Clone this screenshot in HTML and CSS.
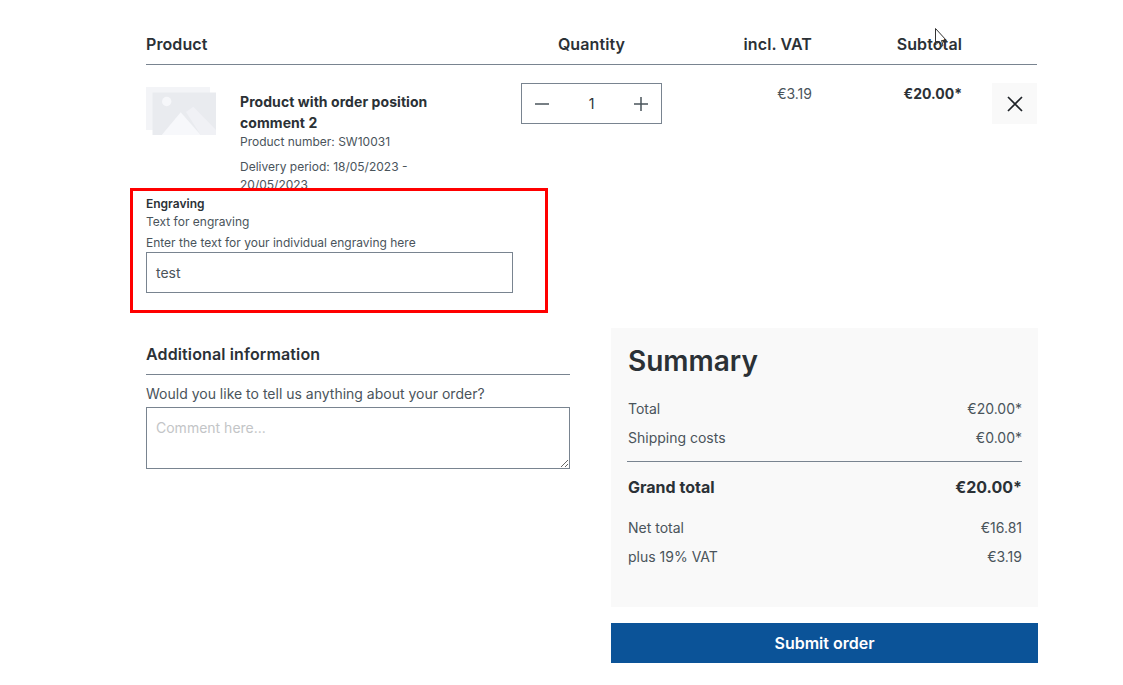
FILE: index.html
```html
<!DOCTYPE html>
<html>
<head>
    <title>Checkout</title>
    <link rel="stylesheet" href="styles.css">
</head>
<body>
    <svg class="cursor" width="14" height="22" viewBox="0 0 14 22">
        <path d="M0.500 0.500V17L4 13.500L6 18.500L8 17.500L6.500 12.500H11.500Z" fill="none" stroke="#333" stroke-width="1"/>
    </svg>

    <div class="page">
        <div class="cart-header">
            <div class="col-product">Product</div>
            <div class="col-quantity">Quantity</div>
            <div class="col-vat">incl. VAT</div>
            <div class="col-subtotal">Subtotal</div>
        </div>

        <div class="line-item">
            <div class="col-product product-info">
                <svg class="product-image" width="70" height="48" viewBox="0 0 70 48">
                    <rect x="0" y="0" width="64" height="43" fill="#f3f4f7"/>
                    <rect x="6.500" y="5.500" width="63.500" height="42.500" fill="#e9ebef"/>
                    <circle cx="20.700" cy="14.500" r="4.700" fill="#f6f7fa"/>
                    <path d="M40 25L47.300 19.700L70 43V48H54.700Z" fill="#f0f1f5"/>
                    <path d="M15.700 48L34.700 25.300L54.700 48Z" fill="#f7f8fb"/>
                </svg>
                <div class="product-text">
                    <div class="product-name">Product with order position comment 2</div>
                    <div class="product-number">Product number: SW10031</div>
                    <div class="product-delivery">Delivery period: 18/05/2023 - 20/05/2023</div>
                </div>
            </div>
            <div class="col-quantity">
                <div class="qty-box">
                    <svg width="16" height="16" viewBox="0 0 16 16"><path d="M1 8H15" stroke="#4a545b" stroke-width="1.500"/></svg>
                    <span class="qty-value">1</span>
                    <svg width="16" height="16" viewBox="0 0 16 16"><path d="M1 8H15M8 1V15" stroke="#4a545b" stroke-width="1.500"/></svg>
                </div>
            </div>
            <div class="col-vat price-vat">€3.19</div>
            <div class="col-subtotal price-subtotal">€20.00*</div>
            <div class="remove-btn">
                <svg width="16" height="16" viewBox="0 0 16 16"><path d="M1 1L15 15M15 1L1 15" stroke="#1f2328" stroke-width="1.700"/></svg>
            </div>
        </div>

        <div class="engraving">
            <div class="engraving-title">Engraving</div>
            <div class="engraving-sub">Text for engraving</div>
            <label class="engraving-label">Enter the text for your individual engraving here</label>
            <div class="engraving-input">test</div>
        </div>

        <div class="bottom">
            <div class="additional">
                <div class="additional-title">Additional information</div>
                <label class="comment-label">Would you like to tell us anything about your order?</label>
                <textarea class="comment" placeholder="Comment here..."></textarea>
            </div>
            <div class="summary-col">
                <div class="summary">
                    <h2>Summary</h2>
                    <div class="summary-row"><span>Total</span><span>€20.00*</span></div>
                    <div class="summary-row"><span>Shipping costs</span><span>€0.00*</span></div>
                    <div class="summary-row grand"><span>Grand total</span><span>€20.00*</span></div>
                    <div class="summary-row"><span>Net total</span><span>€16.81</span></div>
                    <div class="summary-row"><span>plus 19% VAT</span><span>€3.19</span></div>
                </div>
                <button class="submit-btn">Submit order</button>
            </div>
        </div>
    </div>
</body>
</html>
```

FILE: styles.css
```css
body {
    margin: 0;
    background-color: #fff;
    font-family: Inter, "Liberation Sans", sans-serif;
    color: #2b3136;
    font-size: 14px;
}
.page {
    width: 892px;
    margin-left: 146px;
}
.cursor {
    position: absolute;
    top: 28px;
    left: 935px;
}
.cart-header {
    display: flex;
    align-items: center;
    width: 891px;
    height: 40px;
    padding-top: 24px;
    border-bottom: 1px solid #798490;
    font-size: 16px;
    font-weight: 600;
    letter-spacing: 0.1px;
}
.col-product {
    width: 375px;
}
.col-quantity {
    width: 141px;
    text-align: center;
}
.col-vat {
    width: 150px;
    text-align: right;
}
.col-subtotal {
    width: 150px;
    text-align: right;
}
.line-item {
    display: flex;
    align-items: flex-start;
    width: 891px;
    height: 105px;
    padding-top: 18px;
}
.product-info {
    display: flex;
    gap: 24px;
    margin-top: 4px;
}
.product-image {
    flex: none;
}
.product-text {
    width: 200px;
    font-size: 12px;
    line-height: 18px;
    color: #4a545b;
}
.product-name {
    font-size: 14px;
    font-weight: 700;
    letter-spacing: 0.07px;
    line-height: 21px;
    margin-top: 4px;
    color: #2b3136;
}
.product-delivery {
    margin-top: 7px;
}
.qty-box {
    display: flex;
    align-items: center;
    justify-content: space-between;
    height: 39px;
    padding: 0 12px;
    border: 1px solid #798490;
}
.price-vat {
    padding-top: 2px;
    line-height: 18px;
    color: #4a545b;
}
.price-subtotal {
    padding-top: 2px;
    line-height: 18px;
    font-weight: 700;
}
.remove-btn {
    display: flex;
    align-items: center;
    justify-content: center;
    width: 45px;
    height: 41px;
    margin-left: 30px;
    background-color: #f9f9f9;
}
.engraving {
    position: relative;
    box-sizing: border-box;
    width: 418px;
    height: 125px;
    margin-left: -16px;
    padding: 0 32px 0 13px;
    border: 3px solid #f00;
    background-color: #fff;
    font-size: 12px;
}
.engraving-title {
    margin-top: 4px;
    font-weight: 600;
    line-height: 18px;
}
.engraving-sub {
    line-height: 18px;
    color: #4a545b;
}
.engraving-label {
    display: block;
    margin-top: 3px;
    line-height: 18px;
    color: #4a545b;
}
.engraving-input {
    box-sizing: border-box;
    height: 41px;
    padding: 0 9px;
    border: 1px solid #798490;
    font-size: 14px;
    line-height: 39px;
    color: #4a545b;
}
.bottom {
    display: flex;
    align-items: flex-start;
    gap: 41px;
    margin-top: 15px;
}
.additional {
    width: 424px;
    padding-top: 15px;
}
.additional-title {
    height: 31px;
    border-bottom: 1px solid #798490;
    font-size: 16px;
    font-weight: 600;
    letter-spacing: 0.13px;
    line-height: 22px;
}
.comment-label {
    display: block;
    margin-top: 8px;
    line-height: 21px;
    color: #4a545b;
}
.comment {
    display: block;
    box-sizing: border-box;
    width: 424px;
    height: 62px;
    margin-top: 3px;
    padding: 11px 9px;
    border: 1px solid #798490;
    border-radius: 0;
    font-family: inherit;
    font-size: 14px;
}
.comment::placeholder {
    color: #c3c5c7;
}
.summary-col {
    width: 427px;
}
.summary {
    box-sizing: border-box;
    height: 279px;
    padding: 15px 16px 0 17px;
    background-color: #f9f9f9;
}
.summary h2 {
    margin: 0 0 19px;
    font-size: 28px;
    font-weight: 600;
    line-height: 36px;
}
.summary-row {
    display: flex;
    justify-content: space-between;
    height: 29px;
    line-height: 21px;
    color: #4a545b;
}
.summary-row.grand {
    height: 36px;
    margin: 5px 0 6px -1px;
    padding: 13px 0 0 1px;
    border-top: 1px solid #798490;
    font-size: 16px;
    font-weight: 700;
    line-height: 24px;
    color: #2b3136;
}
.submit-btn {
    display: block;
    width: 427px;
    height: 40px;
    margin-top: 16px;
    border: none;
    background-color: #0b5398;
    color: #fff;
    font-family: inherit;
    font-size: 16px;
    font-weight: 600;
}
```
